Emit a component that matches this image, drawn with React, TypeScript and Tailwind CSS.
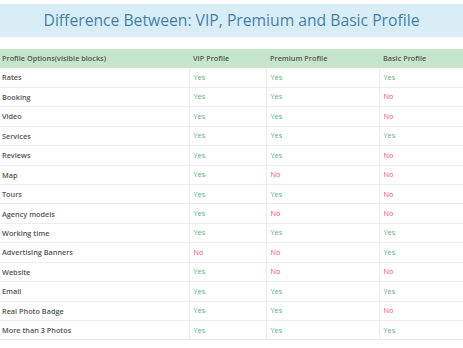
const rows: [string, boolean, boolean, boolean][] = [
  ["Rates", true, true, true],
  ["Booking", true, true, false],
  ["Video", true, true, false],
  ["Services", true, true, true],
  ["Reviews", true, true, false],
  ["Map", true, false, false],
  ["Tours", true, true, false],
  ["Agency models", true, false, false],
  ["Working time", true, true, true],
  ["Advertising Banners", false, false, true],
  ["Website", true, false, false],
  ["Email", true, true, true],
  ["Real Photo Badge", true, true, false],
  ["More than 3 Photos", true, true, true],
];

function Cell({ ok }: { ok: boolean }) {
  return (
    <td className={"border-l border-[#ececec] pl-[4px] " + (ok ? "text-[#55b470]" : "text-[#f2506a]")}>
      {ok ? "Yes" : "No"}
    </td>
  );
}

export default function App() {
  return (
    <div className="w-[463px] h-[348px] bg-white overflow-hidden font-['Open_Sans',sans-serif]">
      <div className="mt-[4px] h-[33px] bg-[#d9edf7] flex items-center justify-center">
        <h1 className="text-[15.7px] text-[#4382a8] leading-none">
          Difference Between: VIP, Premium and Basic Profile
        </h1>
      </div>

      <table className="mt-[12px] w-full table-fixed border-collapse text-[7.3px] leading-none">
        <colgroup>
          <col className="w-[189px]" />
          <col className="w-[77px]" />
          <col className="w-[113px]" />
          <col className="w-[84px]" />
        </colgroup>
        <thead>
          <tr className="h-[19px] bg-[#c6e6cc] text-[#555] text-left">
            <th className="pl-[2px] font-semibold">Profile Options(visible blocks)</th>
            <th className="pl-[4px] font-semibold">VIP Profile</th>
            <th className="pl-[4px] font-semibold">Premium Profile</th>
            <th className="pl-[4px] font-semibold">Basic Profile</th>
          </tr>
        </thead>
        <tbody>
          {rows.map(([label, vip, premium, basic]) => (
            <tr key={label} className="h-[19.43px] border-b border-[#ececec]">
              <td className="pl-[2px] pt-[1px] text-[#555] font-semibold">{label}</td>
              <Cell ok={vip} />
              <Cell ok={premium} />
              <Cell ok={basic} />
            </tr>
          ))}
        </tbody>
      </table>
    </div>
  );
}
